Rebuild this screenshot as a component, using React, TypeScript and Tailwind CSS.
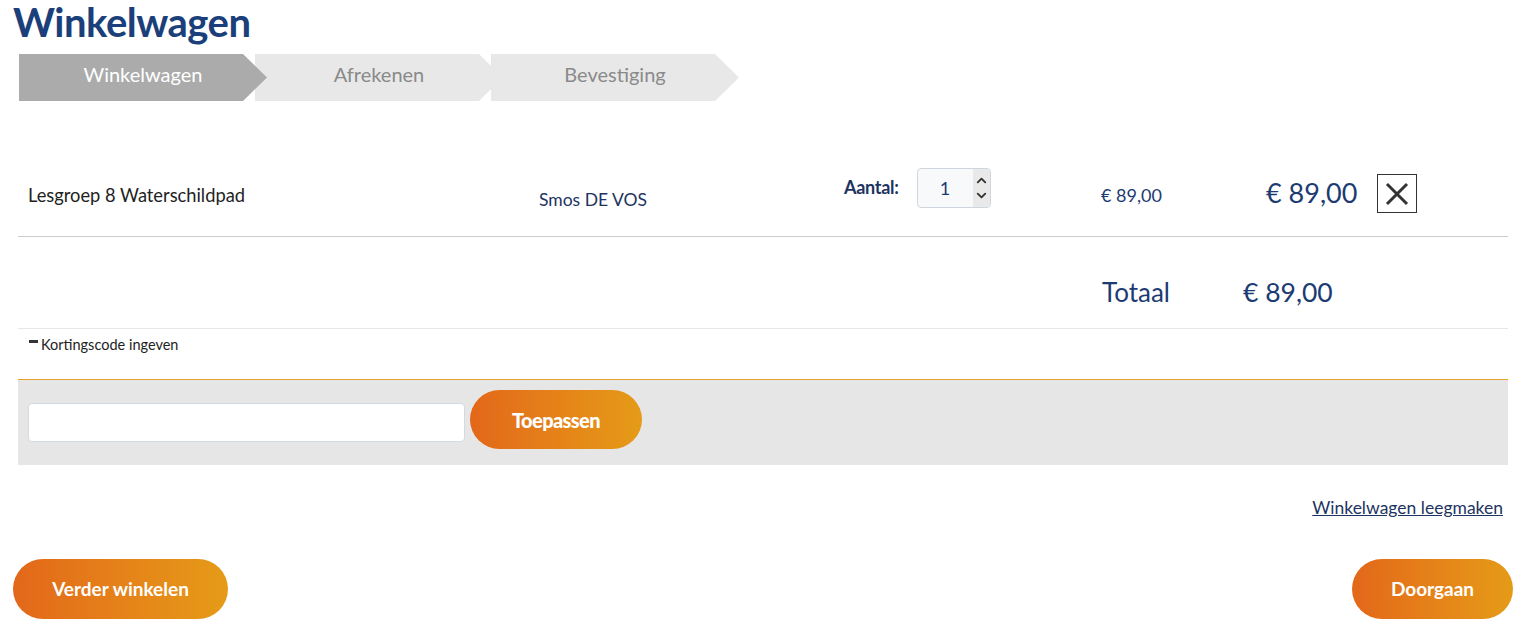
import { ChevronDown, ChevronUp } from 'lucide-react';

const font = { fontFamily: 'Lato, "Open Sans", sans-serif' };

const steps = [
  { label: 'Winkelwagen', active: true },
  { label: 'Afrekenen', active: false },
  { label: 'Bevestiging', active: false },
];

const Steps = () => (
  <div className="flex ml-[6px] mt-[10px] h-[47px]">
    {steps.map((step, i) => (
      <div
        key={step.label}
        className={`relative w-[248px] h-full flex items-center justify-center pb-[8px] text-[20px] [clip-path:polygon(0_0,calc(100%-24px)_0,100%_50%,calc(100%-24px)_100%,0_100%)] ${
          i > 0 ? '-ml-[12px]' : ''
        } ${step.active ? 'bg-[#ababab] text-white' : 'bg-[#e8e8e8] text-[#8a8a8a]'}`}
        style={{ zIndex: 10 - i }}
      >
        <span>{step.label}</span>
      </div>
    ))}
  </div>
);

const QuantityInput = () => (
  <div className="flex h-[40px] w-[74px] rounded-[4px] border border-[#cfd6de] bg-[#f8f9fa] overflow-hidden">
    <div className="flex-1 flex items-center justify-center text-[18px] text-[#1d3b73]">1</div>
    <div className="w-[17px] flex flex-col items-center justify-center bg-[#e9e9e9] text-[#333]">
      <ChevronUp size={15} strokeWidth={3} />
      <ChevronDown size={15} strokeWidth={3} />
    </div>
  </div>
);

const RemoveButton = () => (
  <button className="w-[40px] h-[39px] border-[1.5px] border-[#333] flex items-center justify-center bg-white">
    <svg width="24" height="24" viewBox="0 0 24 24">
      <path d="M2 2 L22 22 M22 2 L2 22" stroke="#333" strokeWidth="3" />
    </svg>
  </button>
);

const OrangeButton = ({ children, className }: { children: string; className: string }) => (
  <button
    className={`rounded-full bg-linear-to-r from-[#e3671a] to-[#e59b17] text-white ${className}`}
  >
    {children}
  </button>
);

export default function App() {
  return (
    <div className="min-h-screen bg-white pl-[13px] pr-[14px]" style={font}>
      <h1 className="text-[40px] leading-[44px] font-bold text-[#1b3f7a] tracking-[-0.5px]">Winkelwagen</h1>
      <Steps />

      <div className="mx-[5px] mt-[49px]">
        {/* product row */}
        <div className="flex items-center h-[87px] border-b border-[#cccccc]">
          <div className="w-[511px] pl-[10px] pt-[6px] text-[18.3px] text-[#222]">Lesgroep 8 Waterschildpad</div>
          <div className="w-[310px] pl-[10px] pt-[14px] text-[17.5px] text-[#1d3461]">Smos DE VOS</div>
          <div className="w-[262px] pl-[5px] flex items-start gap-[18px] -mt-[10px]">
            <span className="pt-[6px] text-[18px] font-bold text-[#1d3461] tracking-[-0.3px]">Aantal:</span>
            <QuantityInput />
          </div>
          <div className="w-[165px] pt-[4px] text-[18px] text-[#1d3b73]">€ 89,00</div>
          <div className="w-[111px] text-[27px] text-[#1d3b73]">€ 89,00</div>
          <div className="pt-[1px]">
            <RemoveButton />
          </div>
        </div>

        {/* total row */}
        <div className="flex h-[92px] pt-[36px] border-b border-[#e6e6e6] text-[26px] text-[#1d3b73]">
          <div className="ml-[1084px] w-[141px]">Totaal</div>
          <div className="text-[26.5px]">€ 89,00</div>
        </div>

        {/* discount */}
        <div className="h-[50px] pt-[5px] pl-[11px] flex items-start text-[14.5px] text-[#222]">
          <span className="mt-[6px] mr-[3px] w-[9px] h-[3px] bg-[#333]" />
          <span>Kortingscode ingeven</span>
        </div>

        <div className="border-t border-[#e8a22a] bg-[#e6e6e6] h-[86px] flex items-start gap-[5px] pl-[10px] pt-[10px]">
          <input
            type="text"
            className="mt-[13px] w-[437px] h-[39px] rounded-[4px] border border-[#d3dae2] bg-white outline-0"
          />
          <OrangeButton className="w-[172px] h-[59px] text-[20px] font-black tracking-[-0.6px]">Toepassen</OrangeButton>
        </div>

        <div className="pt-[31px] pr-[5px] text-right">
          <a href="#" className="text-[17.5px] leading-[20px] text-[#1d3461] underline">
            Winkelwagen leegmaken
          </a>
        </div>
      </div>

      <div className="mt-[39px] flex justify-between">
        <OrangeButton className="w-[215px] h-[60px] text-[19px] font-bold">Verder winkelen</OrangeButton>
        <OrangeButton className="w-[161px] h-[60px] text-[19px] font-bold">Doorgaan</OrangeButton>
      </div>
    </div>
  );
}
